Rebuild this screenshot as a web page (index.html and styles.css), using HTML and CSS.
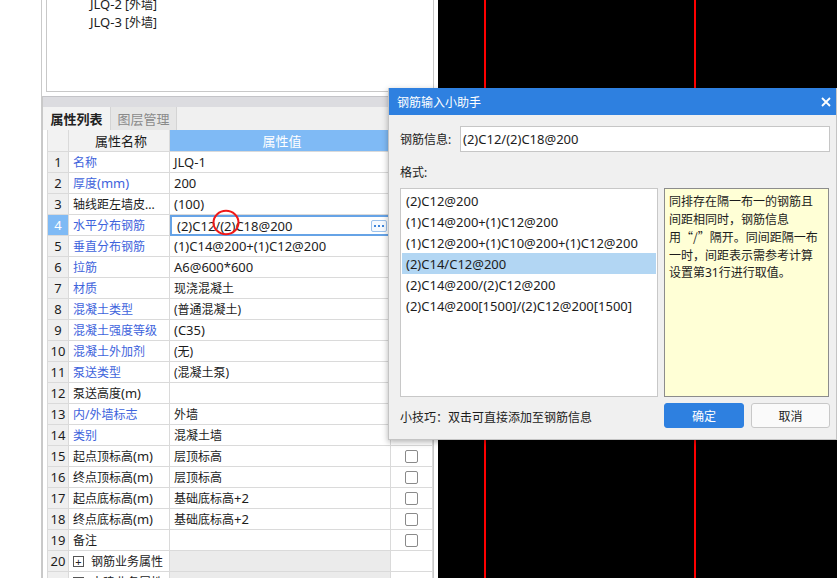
FILE: index.html
```html
<!DOCTYPE html>
<html lang="zh-CN">
<head>
<meta charset="utf-8">
<title>钢筋输入小助手</title>
<link rel="stylesheet" href="styles.css">
</head>
<body>
<div class="screen">
  <div class="gutter"></div>
  <div class="leftpane">
    <div class="tree">
      <div class="tree-list">
        <div class="tree-item"><span class="lat">JLQ-2</span> [外墙]</div>
        <div class="tree-item"><span class="lat">JLQ-3</span> [外墙]</div>
      </div>
    </div>
    <div class="props">
      <div class="props-bar"></div>
      <div class="tabs">
        <div class="tab active">属性列表</div>
        <div class="tab">图层管理</div>
      </div>
      <div class="grid">
        <div class="c num head"></div><div class="c name head center">属性名称</div><div class="c val head hv">属性值</div><div class="c chk head"></div>

        <div class="c num">1</div><div class="c name blue">名称</div><div class="c val lat">JLQ-1</div><div class="c chk"></div>
        <div class="c num">2</div><div class="c name blue">厚度<span class="lat">(mm)</span></div><div class="c val lat">200</div><div class="c chk"></div>
        <div class="c num">3</div><div class="c name">轴线距左墙皮...</div><div class="c val lat">(100)</div><div class="c chk"></div>
        <div class="c num sel">4</div><div class="c name blue">水平分布钢筋</div>
        <div class="c val editing"><span class="lat">(2)C12/(2)C18@200</span><span class="more"><i></i><i></i><i></i></span></div><div class="c chk"></div>
        <div class="c num">5</div><div class="c name blue">垂直分布钢筋</div><div class="c val lat">(1)C14@200+(1)C12@200</div><div class="c chk"></div>
        <div class="c num">6</div><div class="c name blue">拉筋</div><div class="c val lat">A6@600*600</div><div class="c chk"></div>
        <div class="c num">7</div><div class="c name blue">材质</div><div class="c val">现浇混凝土</div><div class="c chk"></div>
        <div class="c num">8</div><div class="c name blue">混凝土类型</div><div class="c val">(普通混凝土)</div><div class="c chk"></div>
        <div class="c num">9</div><div class="c name blue">混凝土强度等级</div><div class="c val"><span class="lat">(C35)</span></div><div class="c chk"></div>
        <div class="c num">10</div><div class="c name blue">混凝土外加剂</div><div class="c val">(无)</div><div class="c chk"></div>
        <div class="c num">11</div><div class="c name blue">泵送类型</div><div class="c val">(混凝土泵)</div><div class="c chk"></div>
        <div class="c num">12</div><div class="c name">泵送高度<span class="lat">(m)</span></div><div class="c val"></div><div class="c chk"></div>
        <div class="c num">13</div><div class="c name blue">内/外墙标志</div><div class="c val">外墙</div><div class="c chk"></div>
        <div class="c num">14</div><div class="c name blue">类别</div><div class="c val">混凝土墙</div><div class="c chk"></div>
        <div class="c num">15</div><div class="c name">起点顶标高<span class="lat">(m)</span></div><div class="c val">层顶标高</div><div class="c chk"><span class="box"></span></div>
        <div class="c num">16</div><div class="c name">终点顶标高<span class="lat">(m)</span></div><div class="c val">层顶标高</div><div class="c chk"><span class="box"></span></div>
        <div class="c num">17</div><div class="c name">起点底标高<span class="lat">(m)</span></div><div class="c val">基础底标高<span class="lat">+2</span></div><div class="c chk"><span class="box"></span></div>
        <div class="c num">18</div><div class="c name">终点底标高<span class="lat">(m)</span></div><div class="c val">基础底标高<span class="lat">+2</span></div><div class="c chk"><span class="box"></span></div>
        <div class="c num">19</div><div class="c name">备注</div><div class="c val"></div><div class="c chk"><span class="box"></span></div>
        <div class="c num">20</div><div class="c name"><span class="plus">+</span>钢筋业务属性</div><div class="c val group"></div><div class="c chk"></div>
        <div class="c num">21</div><div class="c name"><span class="plus">+</span>土建业务属性</div><div class="c val group"></div><div class="c chk"></div>
      </div>
    </div>
  </div>
  <div class="canvas">
    <div class="redline l1"></div>
    <div class="redline l2"></div>
  </div>

  <svg class="mark" width="30" height="28" viewBox="0 0 30 28"><ellipse cx="15" cy="13.5" rx="12.5" ry="11.8" fill="none" stroke="#f01818" stroke-width="2"/></svg>

  <div class="dlg">
    <div class="dlg-title">
      <span>钢筋输入小助手</span>
      <svg class="close" width="10" height="10" viewBox="0 0 10 10"><path d="M1 1L9 9M9 1L1 9" stroke="#fff" stroke-width="1.8" fill="none"/></svg>
    </div>
    <div class="dlg-body">
      <div class="info-row">
        <span class="info-label">钢筋信息:</span>
        <div class="info-input lat">(2)C12/(2)C18@200</div>
      </div>
      <div class="fmt-label">格式:</div>
      <div class="boxes">
        <div class="list">
          <div class="item lat">(2)C12@200</div>
          <div class="item lat">(1)C14@200+(1)C12@200</div>
          <div class="item lat">(1)C12@200+(1)C10@200+(1)C12@200</div>
          <div class="item lat on">(2)C14/C12@200</div>
          <div class="item lat">(2)C14@200/(2)C12@200</div>
          <div class="item lat">(2)C14@200[1500]/(2)C12@200[1500]</div>
        </div>
        <div class="note">同排存在隔一布一的钢筋且<br>间距相同时，钢筋信息<br>用<span class="cjk">“/”</span>隔开。同间距隔一布<br>一时，间距表示需参考计算<br>设置第31行进行取值。</div>
      </div>
      <div class="footer">
        <span class="tip">小技巧：双击可直接添加至钢筋信息</span>
        <div class="btn primary">确定</div>
        <div class="btn">取消</div>
      </div>
    </div>
  </div>
</div>
</body>
</html>
```

FILE: styles.css
```css
* { box-sizing: border-box; }
html, body { margin: 0; padding: 0; }
body {
  width: 837px;
  height: 578px;
  overflow: hidden;
  background: #fff;
  font-family: "Noto Sans", "Noto Sans CJK SC", sans-serif;
  font-size: 12px;
  color: #1c1c1c;
}
.lat { font-size: 13px; }
.cjk { font-family: "Noto Sans CJK SC", sans-serif; }

.screen {
  position: relative;
  display: flex;
  width: 837px;
  height: 578px;
  overflow: hidden;
}
.gutter {
  width: 42px;
  flex: none;
  border-right: 1px solid #cacaca;
}
.leftpane {
  width: 396px;
  flex: none;
  display: flex;
  flex-direction: column;
}

/* tree */
.tree {
  margin-left: 4px;
  width: 388px;
  height: 92px;
  flex: none;
  border: 1px solid #c8c8c8;
  border-top: none;
  overflow: hidden;
}
.tree-list {
  margin-top: -5px;
  padding-left: 43px;
}
.tree-item {
  height: 18px;
  line-height: 18px;
  white-space: nowrap;
}

/* properties */
.props {
  margin-top: 4px;
  width: 392px;
  flex: 1;
  border-left: 1px solid #c8c8c8;
  border-right: 1px solid #c8c8c8;
  display: flex;
  flex-direction: column;
  overflow: hidden;
}
.props-bar {
  height: 11px;
  flex: none;
  background: #dcdce0;
  border-top: 1px solid #c4c4c8;
}
.tabs {
  height: 23px;
  flex: none;
  display: flex;
  background: #f0f0f0;
}
.tab {
  display: flex;
  align-items: center;
  justify-content: center;
  height: 23px;
  font-size: 13px;
  color: #8a8a8a;
  background: #e6e6e6;
  border-right: 1px solid #d4d4d4;
  width: 66px;
}
.tab.active {
  width: 68px;
  color: #222;
  background: #f3f3f3;
  font-weight: bold;
}

.grid {
  margin-left: 4px;
  display: grid;
  grid-template-columns: 21px 101px 221px 42px;
  grid-template-rows: 22px;
  grid-auto-rows: 21px;
  width: 385px;
  border-left: 1px solid #dadada;
}
.c {
  border-right: 1px solid #dadada;
  border-bottom: 1px solid #dadada;
  display: flex;
  align-items: center;
  white-space: nowrap;
  overflow: hidden;
}
.num {
  background: #efefef;
  justify-content: center;
  font-size: 13px;
}
.num.sel {
  background: #7fbaf5;
  color: #fff;
}
.head { background: #f2f2f2; }
.center { justify-content: center; font-size: 13px; }
.hv {
  background: #7fbaf5;
  color: #fff;
  justify-content: center;
  font-size: 13px;
}
.name { padding-left: 4px; }
.val { padding-left: 4px; }
.blue { color: #3e63dc; }
.chk { justify-content: center; }
.editing {
  border: 2px solid #66a3e6;
  padding-left: 5px;
  padding-right: 2px;
  justify-content: space-between;
}
.more {
  width: 16px;
  height: 12px;
  border: 1px solid #9cc2ec;
  border-radius: 2px;
  display: flex;
  align-items: center;
  justify-content: center;
  gap: 2px;
  background: #f6faff;
}
.more i {
  width: 2px;
  height: 2px;
  background: #3f86db;
}
.box {
  width: 13px;
  height: 13px;
  border: 1px solid #8a8a8a;
  border-radius: 2px;
  background: #fff;
}
.group { background: #ebebeb; }
.plus {
  width: 11px;
  height: 11px;
  border: 1px solid #555;
  display: inline-flex;
  align-items: center;
  justify-content: center;
  font-size: 11px;
  line-height: 1;
  margin-right: 7px;
  color: #222;
}

/* drawing canvas */
.canvas {
  flex: 1;
  background: #000;
  position: relative;
}
.redline {
  position: absolute;
  top: 0;
  bottom: 0;
  width: 2px;
  background: #f00;
}
.l1 { left: 46px; }
.l2 { left: 256px; }

/* annotation */
.mark {
  position: absolute;
  left: 211px;
  top: 209px;
}

/* dialog */
.dlg {
  position: absolute;
  left: 388px;
  top: 88px;
  width: 449px;
  height: 352px;
  background: #f0f0f0;
  border: 1px solid #c4c4c4;
  border-top: none;
  box-shadow: 0 2px 6px rgba(0,0,0,0.3);
  display: flex;
  flex-direction: column;
}
.dlg-title {
  height: 27px;
  flex: none;
  background: #2e80e0;
  color: #fff;
  display: flex;
  align-items: center;
  justify-content: space-between;
  padding: 0 5px 0 8px;
  font-size: 12px;
}
.dlg-body {
  padding: 11px 6px 0 11px;
}
.info-row {
  display: flex;
  align-items: center;
  height: 26px;
}
.info-label { width: 60px; flex: none; }
.info-input {
  width: 370px;
  height: 26px;
  border: 1px solid #c6c6c6;
  background: #fff;
  display: flex;
  align-items: center;
  padding-left: 2px;
}
.fmt-label {
  margin-top: 13px;
  height: 16px;
  line-height: 16px;
}
.boxes {
  display: flex;
  gap: 6px;
  margin-top: 7px;
  height: 209px;
}
.list {
  width: 258px;
  height: 209px;
  background: #fff;
  border: 1px solid #c8c8c8;
  padding: 1px;
}
.item {
  height: 21px;
  display: flex;
  align-items: center;
  padding-left: 4px;
  white-space: nowrap;
}
.item.on { background: #b2d6f3; }
.note {
  width: 165px;
  height: 209px;
  background: #ffffd6;
  border: 1px solid #8c8c8c;
  padding: 4px 0 0 4px;
  line-height: 17.5px;
  white-space: nowrap;
}
.footer {
  display: flex;
  align-items: center;
  margin-top: 6px;
  height: 25px;
}
.tip { flex: 1; padding-top: 3px; }
.btn {
  width: 79px;
  height: 25px;
  display: flex;
  align-items: center;
  justify-content: center;
  border: 1px solid #c8c8c8;
  border-radius: 3px;
  background: #fafafa;
  margin-left: 7px;
}
.btn.primary {
  width: 80px;
  margin-left: 0;
  background: #2e80e0;
  border-color: #2e80e0;
  color: #fff;
}
```
